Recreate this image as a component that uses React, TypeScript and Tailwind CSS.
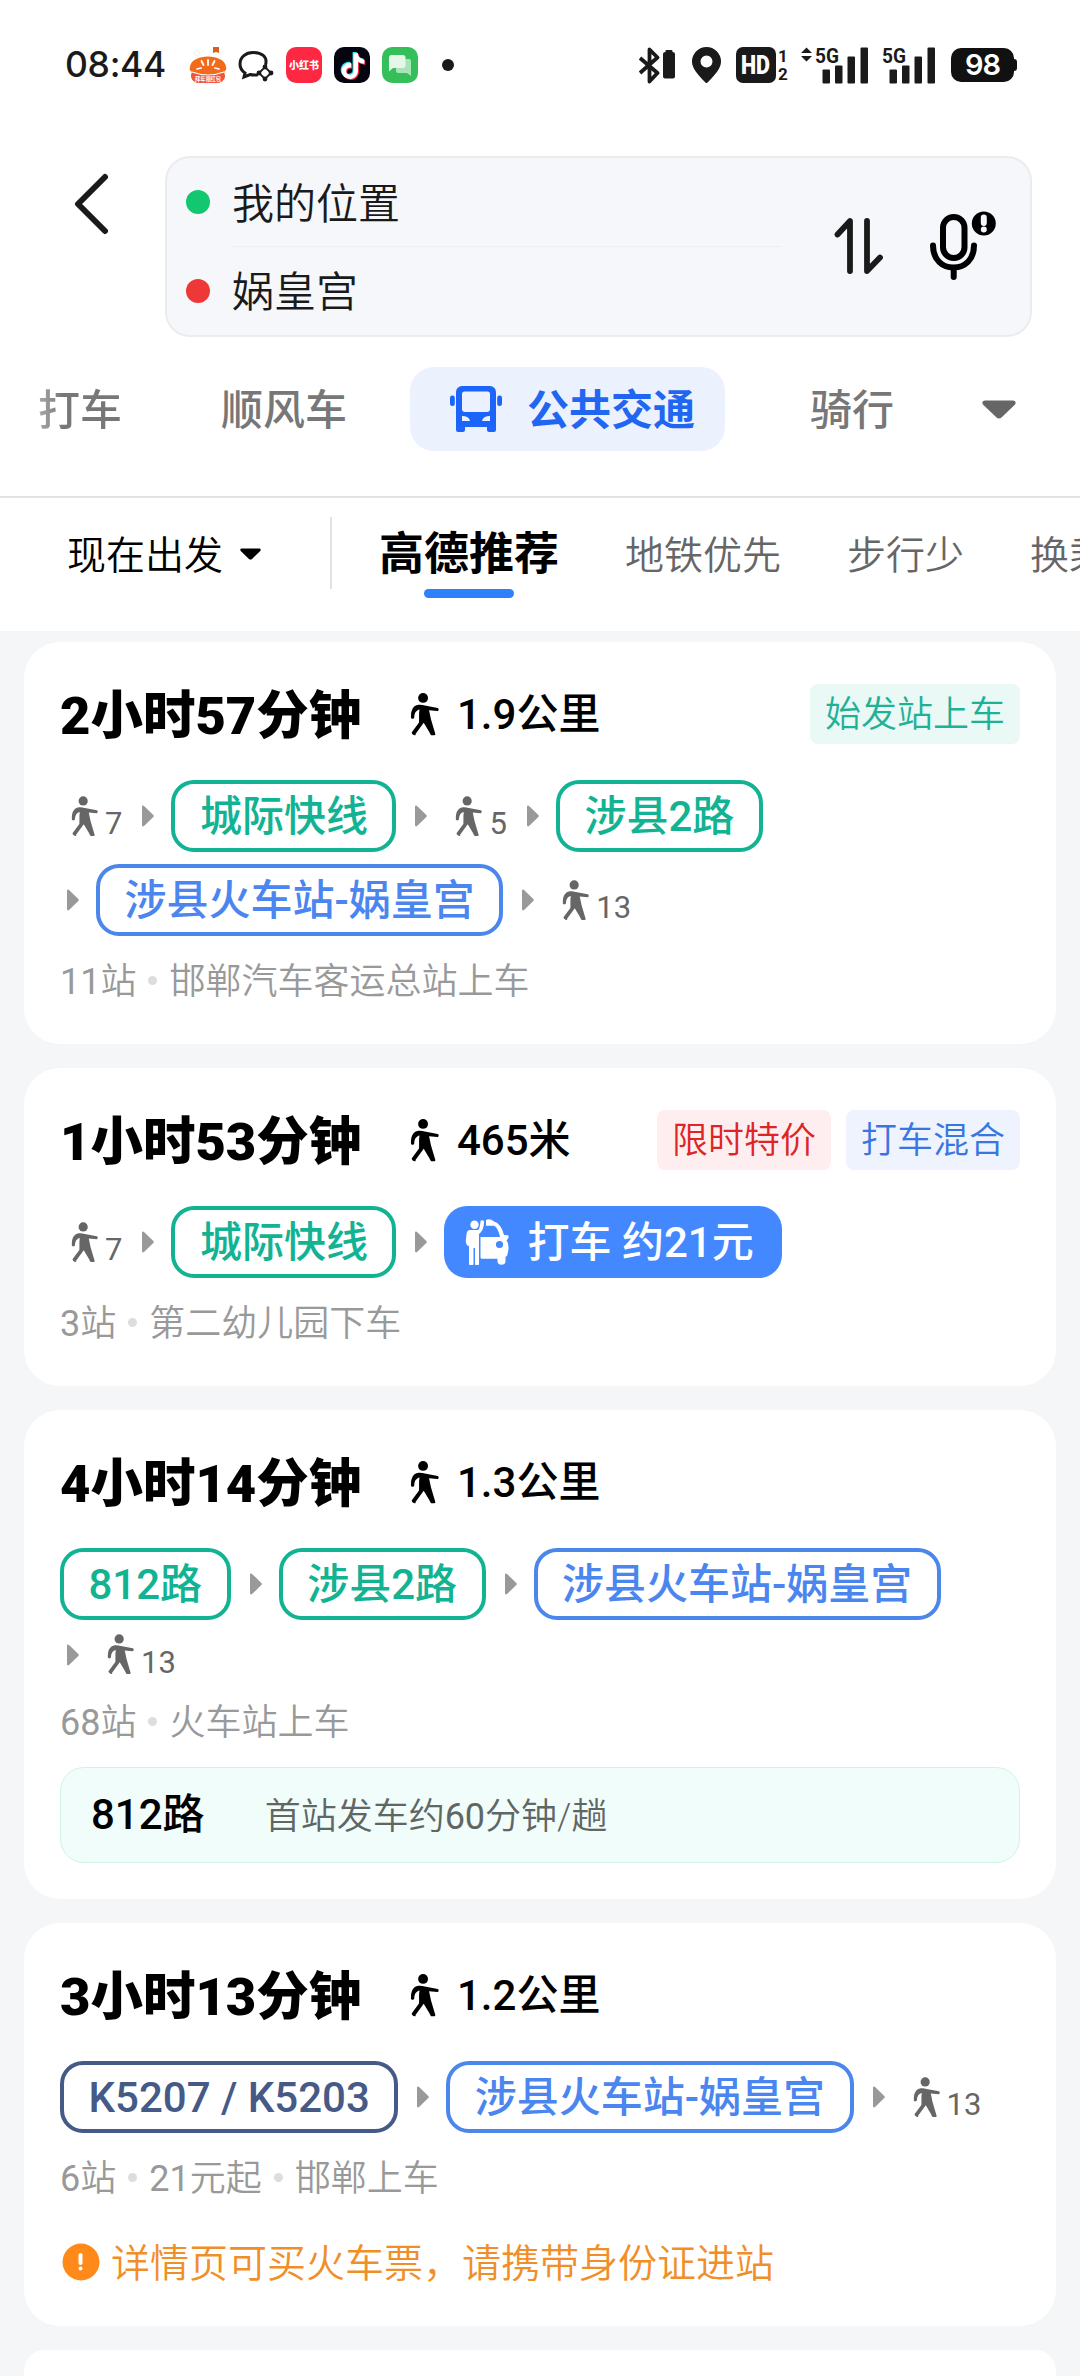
import type { ReactNode } from "react";
import { SiTiktok } from "react-icons/si";

type Tone = "green" | "blue" | "navy";
type Step =
  | { type: "walk"; minutes: number }
  | { type: "line"; name: string; tone: Tone }
  | { type: "taxi"; name: string };

interface Route {
  duration: string;
  walk: string;
  tags: { text: string; style: string }[];
  rows: Step[][];
  info: string[];
  notice?: { line: string; text: string };
  warning?: string;
}

const TONES: Record<Tone, string> = {
  green: "border-[#12b393] text-[#12b393]",
  blue: "border-[#4b86ec] text-[#4b86f0]",
  navy: "border-[#455a86] text-[#455a86]",
};

const ROUTES: Route[] = [
  {
    duration: "2小时57分钟",
    walk: "1.9公里",
    tags: [{ text: "始发站上车", style: "bg-[#eaf9f6] text-[#1fb196]" }],
    rows: [
      [
        { type: "walk", minutes: 7 },
        { type: "line", name: "城际快线", tone: "green" },
        { type: "walk", minutes: 5 },
        { type: "line", name: "涉县2路", tone: "green" },
      ],
      [
        { type: "line", name: "涉县火车站-娲皇宫", tone: "blue" },
        { type: "walk", minutes: 13 },
      ],
    ],
    info: ["11站", "邯郸汽车客运总站上车"],
  },
  {
    duration: "1小时53分钟",
    walk: "465米",
    tags: [
      { text: "限时特价", style: "bg-[#feeeef] text-[#dd2526]" },
      { text: "打车混合", style: "bg-[#eff3fe] text-[#3a76e0]" },
    ],
    rows: [
      [
        { type: "walk", minutes: 7 },
        { type: "line", name: "城际快线", tone: "green" },
        { type: "taxi", name: "打车 约21元" },
      ],
    ],
    info: ["3站", "第二幼儿园下车"],
  },
  {
    duration: "4小时14分钟",
    walk: "1.3公里",
    tags: [],
    rows: [
      [
        { type: "line", name: "812路", tone: "green" },
        { type: "line", name: "涉县2路", tone: "green" },
        { type: "line", name: "涉县火车站-娲皇宫", tone: "blue" },
      ],
      [{ type: "walk", minutes: 13 }],
    ],
    info: ["68站", "火车站上车"],
    notice: { line: "812路", text: "首站发车约60分钟/趟" },
  },
  {
    duration: "3小时13分钟",
    walk: "1.2公里",
    tags: [],
    rows: [
      [
        { type: "line", name: "K5207 / K5203", tone: "navy" },
        { type: "line", name: "涉县火车站-娲皇宫", tone: "blue" },
        { type: "walk", minutes: 13 },
      ],
    ],
    info: ["6站", "21元起", "邯郸上车"],
    warning: "详情页可买火车票，请携带身份证进站",
  },
];

// digits look too thin next to the demilight characters, so they go one step up
const Mixed = ({ text }: { text: string }) => (
  <span className="pt-[3px]">
    {text.split(/(\d+)/).map((part, i) =>
      i % 2 ? (
        <span key={i} className="font-normal">
          {part}
        </span>
      ) : (
        part
      ),
    )}
  </span>
);

const WalkIcon = ({ className }: { className: string }) => (
  <svg viewBox="0 0 27.5 41" className={className} fill="currentColor">
    <circle cx="12.4" cy="4.7" r="4.7" />
    <path d="M.9 23.6C.6 18 2 12 8 11.2c2-.3 4 .2 6 .7l12.300 2.300c1.300.3 1.200 2.900-.2 2.900l-8-.6 1.800 8.500 3.900 13.200c.5 1.200.3 2-.6 2.100l-3.200.1c-.6-.8-1.200-2-1.700-3.200L13 28.300 5.200 39c.3.9 0 1.500-.6 1.400-1.600-.2-2.900-1.400-3.100-2.800l7-9.500c.3-4-.3-8 .5-12.300-3 .7-5 3.200-5 7.600-.4 1.500-2.800 1.500-3.100.2z" />
  </svg>
);

const Caret = ({ className }: { className: string }) => (
  <svg viewBox="0 0 34 19" className={className} fill="currentColor">
    <path d="M3 .5h28c2.500 0 3.500 2.500 1.800 4.200L19.500 17.400c-1.500 1.400-3.500 1.400-5 0L1.200 4.700C-.5 3 .5.5 3 .5z" />
  </svg>
);

const Arrow = () => (
  <svg viewBox="0 0 12 22" className="mr-[17px] h-[22px] w-3 shrink-0 text-[#999]" fill="currentColor">
    <path d="M0 2C0 .5 1.300.1 2.300 1.200l9 8.800c.7.700.7 1.300 0 2l-9 8.800C1.300 21.900 0 21.500 0 20z" />
  </svg>
);

const BusIcon = () => (
  <svg viewBox="0 0 52 46" className="h-[46px] w-[52px] text-[#1d64fb]" fill="currentColor">
    <path
      fillRule="evenodd"
      d="M12 0h28a6 6 0 0 1 6 6v38q0 2-2 2h-5q-2 0-2-2v-3H15v3q0 2-2 2H8q-2 0-2-2V6a6 6 0 0 1 6-6zm2.500 5.500q-2.500 0-2.500 2.500v15q0 3 3 3h22q3 0 3-3V8q0-2.500-2.500-2.500zM12 30v5h8q-1-5-8-5zm28 0v5h-8q1-5 8-5z"
    />
    <rect y="9.500" width="4.800" height="10.500" rx="2.200" />
    <rect x="47.200" y="9.500" width="4.800" height="10.500" rx="2.200" />
  </svg>
);

const TaxiIcon = () => (
  <svg viewBox="0 0 45 46" className="h-[46px] w-[45px]" fill="#fff">
    <circle cx="9.500" cy="5.800" r="4.200" />
    <path d="M5 11h8q2-1.500 2.500-9 .5-1 2-.8t1.600 1.500q-.3 9-5.100 12.300V45q0 1.500-2 1.500T10 45V29H8.500v16q0 1.500-2.200 1.500T4 45V27Q1 27 .8 22L1.500 15Q2 11 5 11z" />
    <path d="M21 1q4-2 8 1.500Q36 4.500 39 16l4 .3q1.500 1.500-.5 4l-1 1q2.500 3 2 9l-1 5q0 2-2 2.500v5q-.5 3-4 3t-4-3v-3H17q-1.500 0-1.500-1.500V18H35Q33 8.500 29 6.800h-8z" />
    <circle cx="34.500" cy="25.500" r="3.600" fill="#4388ff" />
  </svg>
);

const Signal = ({ data }: { data?: boolean }) => (
  <svg viewBox="0 -6 68 49" className="h-[49px] w-[68px] overflow-visible" fill="#1a1a1a">
    {data && <path d="M5.500.5l5.500 5.500H0zM5.500 14.500L11 9H0z" />}
    <text x="14" y="15.500" fontSize="20.500" fontWeight="700" textLength="24" lengthAdjust="spacingAndGlyphs">
      5G
    </text>
    <rect x="21.500" y="22.500" width="7.500" height="14" rx="1" />
    <rect x="34" y="18.500" width="7.500" height="18" rx="1" />
    <rect x="46.500" y="9.500" width="7.500" height="27" rx="1" />
    <rect x="59.500" y=".5" width="7.500" height="36" rx="1" />
  </svg>
);

const StatusBar = () => (
  <div className="flex h-[130px] items-center pl-[65px] text-[#1a1a1a]">
    <span className="w-[125px] font-['Inter'] text-[35.5px] leading-none font-medium tracking-[-0.3px]">08:44</span>
    <div className="flex items-center gap-3">
      <svg viewBox="0 0 36 36" className="size-9 overflow-visible">
        <path d="M23 0h6v6l-3-1-3 1z" fill="#d8601d" />
        <circle cx="7" cy="6" r="2.800" fill="none" stroke="#ddd" strokeDasharray="1 1" />
        <path d="M0 20C1 6 35 6 36 20c1 2-1 5-3 5l2 4q-1 7-9 7H10q-8 0-9-7l1-4c-2-1-3-3-2-5z" fill="#f26a1b" />
        <path d="M2 25q15 6 32 0l1 4q-1 7-9 7H10q-8 0-9-7z" fill="#f0553a" />
        <path d="M18 13v5M11.500 14l2 4M24.500 14l-2 4M7 22l4-1M29 22l-4-1" stroke="#fff" strokeWidth="1.800" strokeLinecap="round" />
        <path d="M2 25q16 6 32 0" stroke="#fff" strokeWidth="1.200" fill="none" />
        <text x="5" y="33.500" fontSize="5.500" fontWeight="700" fill="#fff" textLength="26" lengthAdjust="spacingAndGlyphs">
          拜年领红包
        </text>
      </svg>
      <svg viewBox="0 0 36 36" className="size-9" fill="none" stroke="#1a1a1a" strokeWidth="3">
        <path d="M27.500 18C30 9 23 5.500 15 5.500 8 5.500 2 10 2 17c0 4 2 7 5 9l-1 4 6-2.500q3 .8 8 .3" />
        <path d="M27 20l6 6-6 6-6-6z" strokeWidth="1.800" />
        <g fill="#1a1a1a" stroke="none">
          <circle cx="27" cy="20" r="2.400" />
          <circle cx="33" cy="26" r="2.400" />
          <circle cx="27" cy="32" r="2.400" />
          <circle cx="21" cy="26" r="2.400" />
        </g>
      </svg>
      <div className="flex size-9 items-center justify-center rounded-[10px] bg-[#fe2842] text-[10px] font-black text-white">
        小红书
      </div>
      <div className="relative size-9 rounded-[10px] bg-[#05050f]">
        <SiTiktok className="absolute top-[4.500px] left-[4.500px] size-[26px] text-[#28e8e6]" />
        <SiTiktok className="absolute top-[6.500px] left-[6.500px] size-[26px] text-[#fb2b55]" />
        <SiTiktok className="absolute top-[5.500px] left-[5.500px] size-[26px] text-white" />
      </div>
      <svg viewBox="0 0 36 36" className="size-9">
        <rect width="36" height="36" rx="10" fill="#35bf5b" />
        <path d="M16 12h11q2 0 2 2v15l-4-3h-9q-2 0-2-2V14q0-2 2-2z" fill="#a9e4b8" />
        <path d="M9 8h12q2.500 0 2.500 2.500v8Q23.500 21 21 21H11l-4 3.500V10.500Q7 8 9 8z" fill="#e6f7ea" />
      </svg>
      <span className="ml-3 size-3 rounded-full bg-[#1a1a1a]" />
    </div>
    <div className="ml-[185px] flex items-center">
      <svg viewBox="0 0 37 37" className="h-[37px] w-[37px]" fill="none" stroke="#1a1a1a" strokeWidth="3.800" strokeLinejoin="round">
        <path d="M1 11l17.500 15-8 8.500v-32l8 8L1 26" />
        <path d="M26.500 4q0-1 1-1h5q1 0 1 1v1q2.500 0 2.500 2v22.500q0 2-2 2h-8q-2 0-2-2V7q0-2 2.500-2z" fill="#1a1a1a" stroke="none" />
      </svg>
      <svg viewBox="0 0 29 36" className="ml-4 h-9 w-[29px]" fill="#1a1a1a">
        <path fillRule="evenodd" d="M14.500 0A14.500 14.500 0 0 1 29 14.500C29 21 24 27 15.500 35.500q-1 1-2 0C5 27 0 21 0 14.500A14.500 14.500 0 0 1 14.500 0zm0 8.500a6 6 0 1 0 0 12 6 6 0 0 0 0-12z" />
      </svg>
      <svg viewBox="0 0 52 36" className="ml-[15px] h-9 w-[52px] overflow-visible" fill="#1a1a1a">
        <rect width="40" height="36" rx="7" />
        <text x="5" y="27" fontSize="25" fontWeight="900" fill="#fff" textLength="29" lengthAdjust="spacingAndGlyphs">
          HD
        </text>
        <text x="42" y="15" fontSize="17" fontWeight="700">1</text>
        <text x="42" y="33" fontSize="17" fontWeight="700">2</text>
      </svg>
      <div className="ml-[13px]">
        <Signal data />
      </div>
      <div className="-ml-px">
        <Signal />
      </div>
      <div className="ml-[15px] flex items-center">
        <span className="flex h-[34px] w-[63px] items-center justify-center rounded-[10px] bg-[#111] font-['Inter'] text-[29px] font-semibold tracking-[-1px] text-white">
          98
        </span>
        <span className="h-3 w-[3px] rounded-r-sm bg-[#111]" />
      </div>
    </div>
  </div>
);

const SearchBox = () => (
  <div className="flex pt-[26px]">
    <svg viewBox="0 0 36 62" className="mt-[17px] ml-[74px] h-[62px] w-9" fill="none" stroke="#1a1a1a" strokeWidth="6" strokeLinecap="round" strokeLinejoin="round">
      <path d="M31 4L4 31l27 27" />
    </svg>
    <div className="ml-[55px] flex h-[181px] w-[867px] rounded-[25px] border-2 border-[#ebeced] bg-[#f5f7fa]">
      <div className="ml-[19px] flex w-[596px] flex-col text-[42px] font-[350] text-[#1a1a1a]">
        <div className="flex h-[89px] items-center">
          <span className="size-6 rounded-full bg-[#12c770]" />
          <span className="ml-[22px] pt-1">我的位置</span>
        </div>
        <div className="ml-[46px] h-px bg-[#eceef0]" />
        <div className="flex h-[89px] items-center">
          <span className="size-6 rounded-full bg-[#ee3737]" />
          <span className="ml-[22px] pt-1">娲皇宫</span>
        </div>
      </div>
      <svg viewBox="0 0 50 60" className="mt-[58px] ml-[52px] h-[60px] w-[50px]" fill="none" stroke="#1a1a1a" strokeWidth="5.800" strokeLinecap="round" strokeLinejoin="round">
        <path d="M3.500 18.500L16 5v50M33 5v50l13-13.500" />
      </svg>
      <svg viewBox="0 0 68 72" className="mt-[52px] ml-[46px] h-[72px] w-[68px]" fill="none" stroke="#000" strokeWidth="6" strokeLinecap="round">
        <rect x="13" y="7" width="21.500" height="41" rx="10.700" />
        <path d="M3 35.500c0 14 9 22 20.500 22S44 49.500 44 35.500M23.700 59v8" />
        <circle cx="53.800" cy="13.500" r="12" fill="#000" stroke="none" />
        <path d="M53.800 7.500v5.500M53.800 19.500v.1" stroke="#f5f7fa" />
      </svg>
    </div>
  </div>
);

const ModeTabs = () => (
  <div className="mt-[30px] flex h-[84px] items-center text-[42px] font-medium text-[#777]">
    <span className="ml-[38px] w-[84px] bg-linear-to-r from-[#aaa] to-[#777] to-30% bg-clip-text pt-[3px] text-transparent">打车</span>
    <span className="ml-[99px] w-[126px] pt-[3px]">顺风车</span>
    <div className="ml-[63px] flex h-[84px] w-[315px] items-center rounded-[24px] bg-[#ecf1fe] pl-10 text-[#2166f0]">
      <BusIcon />
      <span className="ml-[25px] pt-[3px] font-bold">公共交通</span>
    </div>
    <span className="ml-[85px] pt-[3px]">骑行</span>
    <Caret className="ml-[88px] h-[19px] w-[34px] text-[#666]" />
  </div>
);

const SortTabs = () => (
  <div className="mt-[45px] flex h-[135px] overflow-hidden border-t-2 border-[#e2e2e2] whitespace-nowrap">
    <div className="ml-[67px] flex h-[112px] w-[194px] shrink-0 items-center text-[39px] font-[350] text-black">
      <span className="pt-1">现在出发</span>
      <Caret className="ml-[17px] h-3 w-[21px]" />
    </div>
    <div className="mt-[19px] ml-[69px] h-[72px] w-0.5 shrink-0 bg-[#e2e2e2]" />
    <div className="ml-[47px] flex w-[180px] shrink-0 flex-col items-center">
      <span className="h-[91px] text-[45px] leading-[114px] font-bold text-black">高德推荐</span>
      <span className="h-[9px] w-[90px] rounded-full bg-[#2f80fb]" />
    </div>
    <div className="ml-[66px] flex h-[112px] shrink-0 items-center gap-[66px] pt-1 text-[39px] font-[350] text-[#666]">
      <span>地铁优先</span>
      <span>步行少</span>
      <span>换乘少</span>
    </div>
  </div>
);

const StepView = ({ step }: { step: Step }) => {
  if (step.type === "walk") {
    return (
      <div className="mr-[20px] ml-[11px] flex h-[45px] items-center text-[#666]">
        <WalkIcon className="h-[41px] w-[27px]" />
        <span className="mt-[15px] ml-[7px] text-[31px] leading-none">{step.minutes}</span>
      </div>
    );
  }
  if (step.type === "taxi") {
    return (
      <div className="flex h-[72px] items-center rounded-[23px] bg-[#4388ff] pr-7 pl-[21px] text-[42px] font-medium text-white">
        <TaxiIcon />
        <span className="ml-[17px]">{step.name}</span>
      </div>
    );
  }
  return (
    <div
      className={`mr-[19px] flex h-[72px] items-center rounded-[23px] border-4 px-[24.5px] pt-px text-[42px] leading-none font-medium ${TONES[step.tone]}`}
    >
      {step.name}
    </div>
  );
};

const Card = ({ children }: { children?: ReactNode }) => (
  <article className="rounded-[36px] bg-white px-9 pt-[42px]">{children}</article>
);

const RouteCard = ({ route }: { route: Route }) => (
  <Card>
    <div className="flex h-[60px] items-center">
      <h2 className="w-[350px] pt-[5px] text-[52.5px] leading-none font-black whitespace-nowrap text-black">{route.duration}</h2>
      <WalkIcon className="h-[43px] w-[29px]" />
      <span className="ml-[18px] pt-px text-[42px] leading-none font-medium">{route.walk}</span>
      <div className="ml-auto flex gap-[15px]">
        {route.tags.map((tag) => (
          <span key={tag.text} className={`h-[60px] rounded-lg px-[15px] text-[36px] leading-[63px] font-[350] ${tag.style}`}>
            {tag.text}
          </span>
        ))}
      </div>
    </div>
    <div className="mt-9 flex flex-col gap-3">
      {route.rows.map((row, r) => (
        <div key={r} className="flex items-center whitespace-nowrap">
          {row.map((step, i) => (
            <div key={i} className={`flex items-center ${r > 0 && i === 0 ? "ml-[7px]" : ""}`}>
              {(r > 0 || i > 0) && <Arrow />}
              <StepView step={step} />
            </div>
          ))}
        </div>
      ))}
    </div>
    <div className="mt-6 flex h-10 items-center text-[36px] leading-none font-[350] text-[#999]">
      {route.info.map((text, i) => (
        <div key={text} className="flex items-center">
          {i > 0 && <span className="mx-3 size-[9px] rounded-full bg-[#ddd]" />}
          <Mixed text={text} />
        </div>
      ))}
    </div>
    {route.notice && (
      <div className="mt-[26px] mb-9 flex h-24 items-center rounded-[24px] border-[1.5px] border-[#cff3e8] bg-[#f0fdfa] pl-[30px]">
        <span className="text-[42px] leading-none font-medium text-black">{route.notice.line}</span>
        <span className="ml-[60px] flex text-[36px] leading-none font-[350] text-[#5f6664]">
          <Mixed text={route.notice.text} />
        </span>
      </div>
    )}
    {route.warning && (
      <div className="mt-[45px] flex h-10 items-center pl-0.5 text-[39px] leading-none font-[350] text-[#f08f2a]">
        <svg viewBox="0 0 38 38" className="mr-[11px] size-[38px]">
          <circle cx="19" cy="19" r="18.500" fill="#ff8a1a" />
          <path d="M18.500 12v8M18.500 25.500v.1" stroke="#fff" strokeWidth="4" strokeLinecap="round" />
        </svg>
        <span className="pt-1">{route.warning}</span>
      </div>
    )}
    {!route.notice && <div className="h-11" />}
  </Card>
);

export default function App() {
  return (
    <div className="h-[2376px] w-[1080px] overflow-hidden bg-[#f4f6f8] font-['Roboto','Noto_Sans_CJK_SC',sans-serif]">
      <header className="bg-white">
        <StatusBar />
        <SearchBox />
        <ModeTabs />
        <SortTabs />
      </header>
      <main className="flex flex-col gap-6 px-6 pt-[11px]">
        {ROUTES.map((route) => (
          <RouteCard key={route.duration} route={route} />
        ))}
        <Card />
      </main>
    </div>
  );
}
